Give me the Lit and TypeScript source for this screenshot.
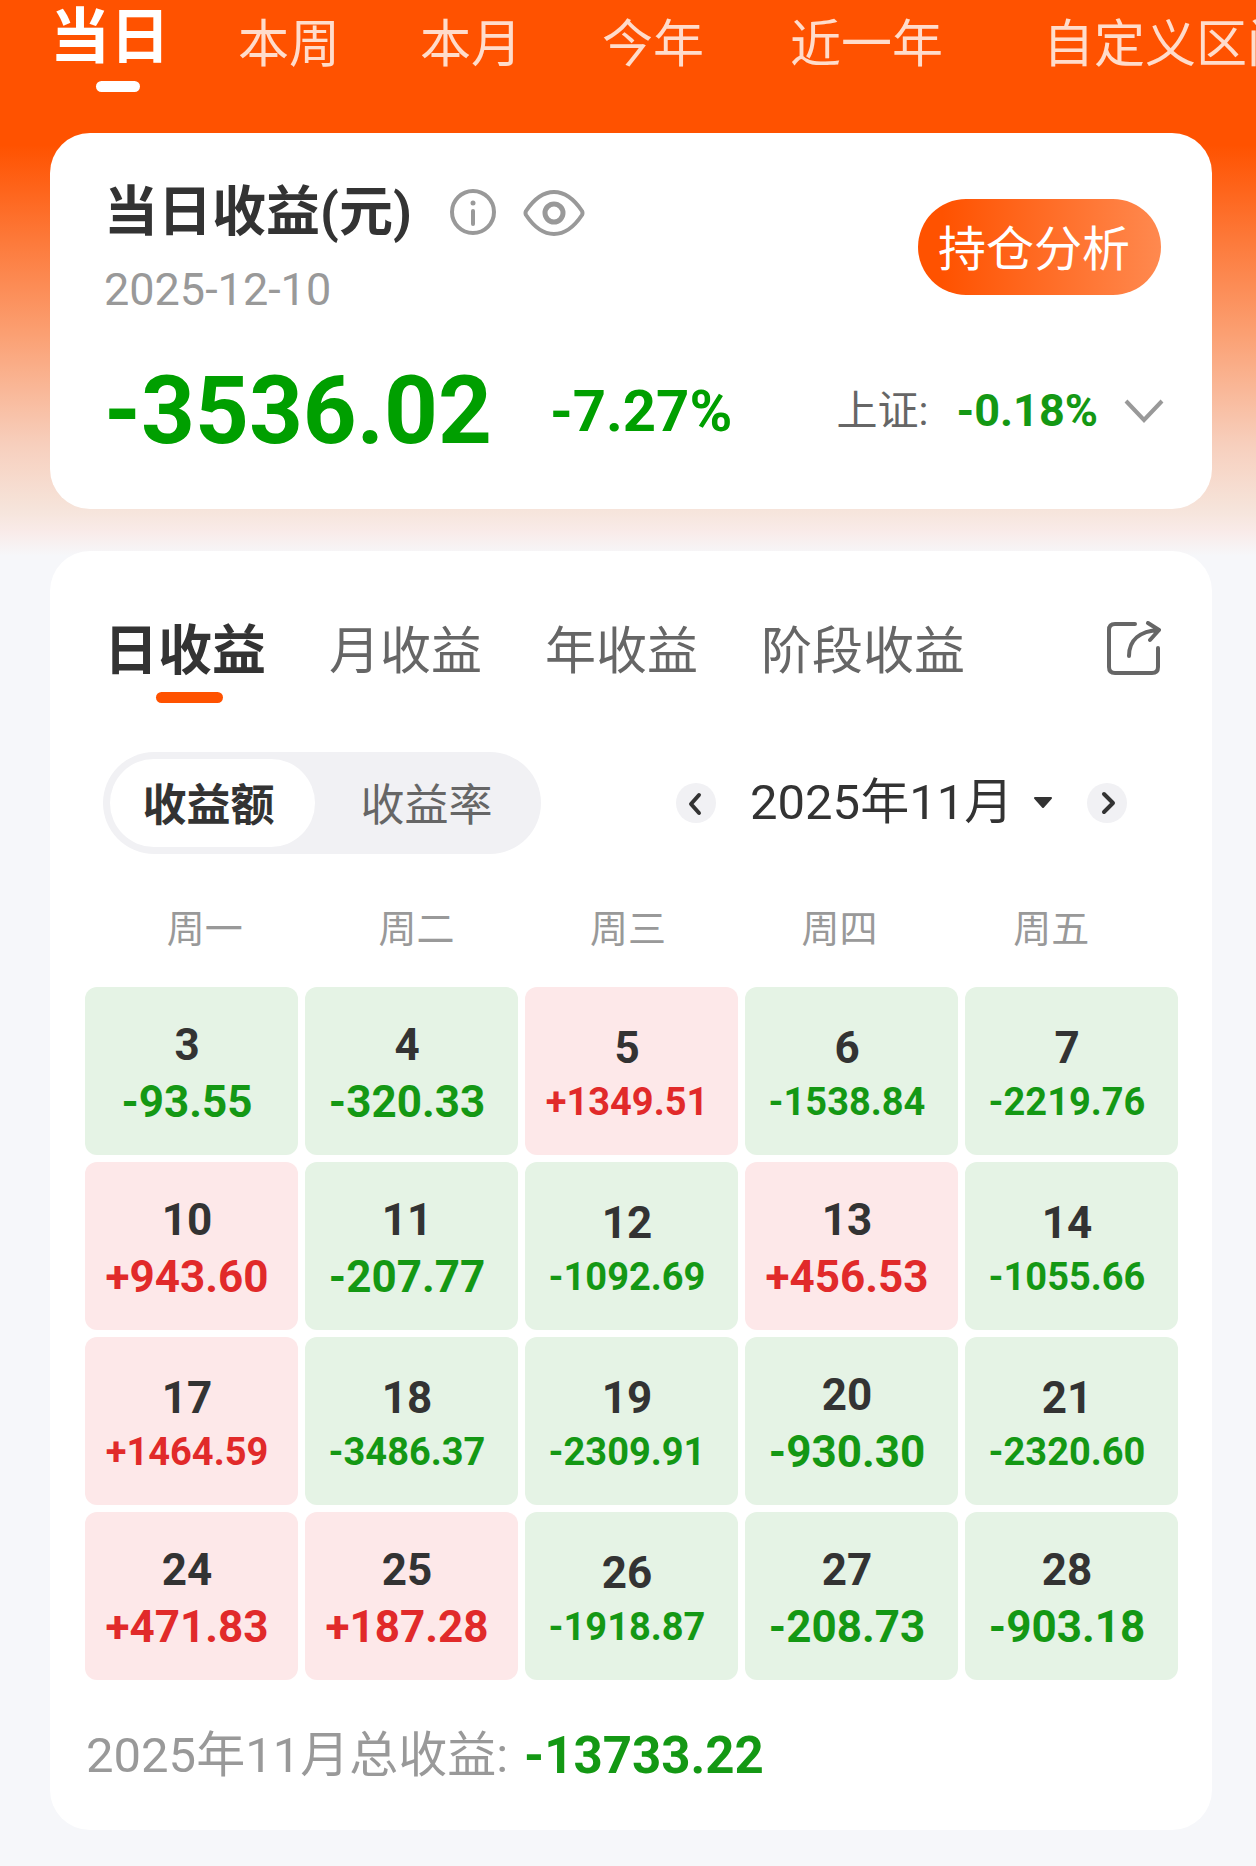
import { LitElement, html, css, svg } from "lit";
import { customElement, property, state } from "lit/decorators.js";
import { classMap } from "lit/directives/class-map.js";

interface Day {
  day: number;
  value: string;
}

const PERIODS = ["当日", "本周", "本月", "今年", "近一年", "自定义区间"];
const VIEWS = ["日收益", "月收益", "年收益", "阶段收益"];
const MODES = ["收益额", "收益率"];
const MONTHS = ["2025年11月", "2025年12月"];
const WEEKDAYS = ["周一", "周二", "周三", "周四", "周五"];

const WEEKS: Day[][] = [
  [
    { day: 3, value: "-93.55" },
    { day: 4, value: "-320.33" },
    { day: 5, value: "+1349.51" },
    { day: 6, value: "-1538.84" },
    { day: 7, value: "-2219.76" },
  ],
  [
    { day: 10, value: "+943.60" },
    { day: 11, value: "-207.77" },
    { day: 12, value: "-1092.69" },
    { day: 13, value: "+456.53" },
    { day: 14, value: "-1055.66" },
  ],
  [
    { day: 17, value: "+1464.59" },
    { day: 18, value: "-3486.37" },
    { day: 19, value: "-2309.91" },
    { day: 20, value: "-930.30" },
    { day: 21, value: "-2320.60" },
  ],
  [
    { day: 24, value: "+471.83" },
    { day: 25, value: "+187.28" },
    { day: 26, value: "-1918.87" },
    { day: 27, value: "-208.73" },
    { day: 28, value: "-903.18" },
  ],
];

const base = css`
  :host {
    display: block;
    font-family: Roboto, "Noto Sans CJK SC", sans-serif;
    color: #333;
  }
  * {
    box-sizing: border-box;
  }
  button,
  select {
    margin: 0;
    padding: 0;
    border: 0;
    background: none;
    font: inherit;
    color: inherit;
    cursor: pointer;
    white-space: nowrap;
  }
  svg {
    display: block;
    fill: none;
  }
`;

@customElement("period-tabs")
class PeriodTabs extends LitElement {
  @state() private active = 0;

  static styles = [
    base,
    css`
      .tabs {
        display: flex;
        align-items: flex-start;
        height: 133px;
        overflow-x: auto;
        overflow-y: hidden;
        scrollbar-width: none;
      }
      .tab {
        flex: none;
        padding: 0 40px;
        font-size: 51px;
        line-height: 90px;
        color: #ffdccb;
      }
      .tab.wide {
        padding: 0 46px;
      }
      .tab.wide:last-child {
        padding-left: 54px;
      }
      .tab.active {
        display: flex;
        flex-direction: column;
        align-items: flex-start;
        gap: 5px;
        margin: 0 12px 0 50px;
        padding: 0 16px 0 0;
        font-size: 60px;
        font-weight: 700;
        line-height: 76px;
        color: #fff;
      }
      .bar {
        align-self: center;
        width: 44px;
        height: 11px;
        margin-left: 16px;
        border-radius: 6px;
        background: #fff;
      }
    `,
  ];

  render() {
    return html`<nav class="tabs">
      ${PERIODS.map(
        (p, i) => html`<button
          class=${classMap({ tab: true, wide: p.length > 2, active: i === this.active })}
          @click=${() => (this.active = i)}
        >
          ${p}${i === this.active ? html`<span class="bar"></span>` : ""}
        </button>`,
      )}
    </nav>`;
  }
}

@customElement("summary-card")
class SummaryCard extends LitElement {
  static styles = [
    base,
    css`
      .card {
        padding: 48px 48px 50px 54px;
        border-radius: 40px;
        background: #fff;
      }
      .head,
      .title-row,
      .figures,
      .index {
        display: flex;
        align-items: center;
      }
      .head {
        justify-content: space-between;
        padding-right: 3px;
      }
      .title {
        margin: 0 37px 0 0;
        font-size: 54px;
        font-weight: 700;
        line-height: 64px;
      }
      .icon {
        margin-right: 26px;
      }
      .date {
        margin: 22px 0 0;
        font-size: 45px;
        line-height: 46px;
        color: #999;
      }
      .analysis {
        height: 96px;
        padding: 0 31px 4px 20px;
        border-radius: 48px;
        background: linear-gradient(90deg, #ff5200 10%, #ff894f);
        font-size: 48px;
        color: #fff;
      }
      .figures {
        margin-top: 50px;
        line-height: 96px;
        font-weight: 700;
        color: #009f00;
      }
      .amount {
        font-size: 94px;
      }
      .rate {
        margin-left: 58px;
        font-size: 58px;
      }
      .index {
        margin-left: auto;
        font-size: 45px;
        color: #149814;
      }
      .label {
        margin-right: 28px;
        font-size: 41px;
        font-weight: 400;
        color: #666;
      }
      .more {
        margin-left: 26px;
      }
    `,
  ];

  render() {
    return html`<section class="card">
      <div class="head">
        <div>
          <div class="title-row">
            <h1 class="title">当日收益(元)</h1>
            <button class="icon" aria-label="说明">
              <svg width="48" height="48" viewBox="0 0 48 48" stroke="#999" stroke-width="4">
                <circle cx="24" cy="23" r="21" />
                <path d="M24 22v13" stroke-linecap="round" />
                <circle cx="24" cy="14" r="2.5" fill="#999" stroke="none" />
              </svg>
            </button>
            <button aria-label="显示金额">
              <svg width="62" height="48" viewBox="0 0 62 48" stroke="#999" stroke-width="4">
                <path
                  d="M3 22C11 10 20 3 31 3s20 7 28 19q1 2 0 4C51 38 42 45 31 45S11 38 3 26q-1-2 0-4z"
                />
                <circle cx="31" cy="24" r="9" stroke-width="5" />
              </svg>
            </button>
          </div>
          <p class="date">2025-12-10</p>
        </div>
        <button class="analysis">持仓分析</button>
      </div>
      <div class="figures">
        <span class="amount">-3536.02</span>
        <span class="rate">-7.27%</span>
        <span class="index">
          <span class="label">上证:</span>
          <span>-0.18%</span>
          <button class="more" aria-label="切换指数">
            <svg width="40" height="24" viewBox="0 0 40 24" stroke="#999" stroke-width="4">
              <path d="M2 2l18 19L38 2" />
            </svg>
          </button>
        </span>
      </div>
    </section>`;
  }
}

@customElement("profit-calendar")
class ProfitCalendar extends LitElement {
  @property({ attribute: false }) weeks: Day[][] = [];

  static styles = [
    base,
    css`
      .table,
      .body {
        display: block;
      }
      .head {
        display: block;
        padding: 0 21px 34px 14px;
      }
      .row {
        display: grid;
        grid-template-columns: repeat(5, 1fr);
      }
      .body .row {
        gap: 7px;
        margin-bottom: 7px;
      }
      .body .row:last-child {
        margin-bottom: 0;
      }
      .weekday {
        padding: 0;
        font-size: 38px;
        font-weight: 400;
        line-height: 48px;
        color: #999;
      }
      .cell {
        display: flex;
        flex-direction: column;
        align-items: center;
        justify-content: center;
        height: 168px;
        padding: 0 9px 1px 0;
        border-radius: 12px;
        background: #e5f3e5;
        font-weight: 700;
        color: #149814;
      }
      .cell.up {
        background: #fde8e9;
        color: #e12a2a;
      }
      .day {
        font-size: 44px;
        line-height: 62px;
        color: #333;
      }
      .value {
        font-size: 44px;
        line-height: 52px;
      }
      .value.long {
        font-size: 38px;
        line-height: 46px;
      }
    `,
  ];

  render() {
    return html`<table class="table">
      <thead class="head">
        <tr class="row">
          ${WEEKDAYS.map((w) => html`<th class="weekday" scope="col">${w}</th>`)}
        </tr>
      </thead>
      <tbody class="body">
        ${this.weeks.map(
          (week) => html`<tr class="row">
            ${week.map(
              (d) => html`<td class=${classMap({ cell: true, up: d.value.startsWith("+") })}>
                <span class="day">${d.day}</span>
                <span class=${classMap({ value: true, long: d.value.length > 7 })}>${d.value}</span>
              </td>`,
            )}
          </tr>`,
        )}
      </tbody>
    </table>`;
  }
}

const arrow = (d: string) => svg`<path d=${d} stroke="#333" stroke-width="4" stroke-linecap="round" stroke-linejoin="round" />`;

@customElement("detail-card")
class DetailCard extends LitElement {
  @state() private view = 0;
  @state() private mode = 0;

  static styles = [
    base,
    css`
      .card {
        padding: 60px 34px 44px 35px;
        border-radius: 40px;
        background: #fff;
      }
      .tabs {
        display: flex;
        align-items: flex-start;
        gap: 63px;
        height: 92px;
        padding: 0 17px 0 19px;
      }
      .tab {
        font-size: 51px;
        line-height: 81px;
        color: #666;
      }
      .tab.active {
        display: flex;
        flex-direction: column;
        align-items: center;
        font-size: 54px;
        font-weight: 700;
        color: #333;
      }
      .bar {
        width: 67px;
        height: 11px;
        margin-left: 8px;
        border-radius: 6px;
        background: #ff5200;
      }
      .share {
        margin: 10px 0 0 auto;
      }
      .controls {
        display: flex;
        align-items: center;
        justify-content: space-between;
        margin: 49px 0 51px;
        padding: 0 51px 0 18px;
      }
      .segment {
        display: flex;
        padding: 7px;
        border-radius: 51px;
        background: #f1f1f4;
      }
      .mode {
        width: 205px;
        height: 88px;
        padding: 0 8px 2px 0;
        border-radius: 44px;
        font-size: 44px;
        color: #666;
      }
      .mode + .mode {
        width: 219px;
        padding: 0 0 2px 4px;
      }
      .mode.active {
        background: #fff;
        font-weight: 700;
        color: #333;
      }
      .month {
        display: flex;
        align-items: center;
      }
      .step {
        border-radius: 50%;
        background: #f1f1f4;
      }
      .picker {
        display: grid;
        align-items: center;
        margin: 0 34px;
      }
      .select,
      .caret {
        grid-area: 1 / 1;
      }
      .select {
        appearance: none;
        padding-right: 39px;
        font-size: 49px;
        line-height: 62px;
      }
      .caret {
        justify-self: end;
        pointer-events: none;
      }
      .total {
        display: flex;
        align-items: center;
        gap: 16px;
        margin: 46px 0 0;
        padding-left: 1px;
        font-size: 49px;
        line-height: 60px;
        color: #999;
      }
      .sum {
        font-size: 51px;
        color: #149814;
      }
    `,
  ];

  render() {
    return html`<section class="card">
      <nav class="tabs">
        ${VIEWS.map(
          (v, i) => html`<button
            class=${classMap({ tab: true, active: i === this.view })}
            @click=${() => (this.view = i)}
          >
            ${v}${i === this.view ? html`<span class="bar"></span>` : ""}
          </button>`,
        )}
        <button class="share" aria-label="分享">
          <svg
            width="54"
            height="54"
            viewBox="0 0 54 54"
            stroke="#666"
            stroke-width="4"
            stroke-linecap="round"
            stroke-linejoin="round"
          >
            <path d="M28 3H8Q2 3 2 9v37q0 6 6 6h37q6 0 6-6V27" />
            <path d="M22 35C22 19 33 10 52 9M41 2l11 7-9 10" />
          </svg>
        </button>
      </nav>
      <div class="controls">
        <div class="segment">
          ${MODES.map(
            (m, i) => html`<button
              class=${classMap({ mode: true, active: i === this.mode })}
              @click=${() => (this.mode = i)}
            >
              ${m}
            </button>`,
          )}
        </div>
        <div class="month">
          <button class="step" aria-label="上个月">
            <svg width="40" height="40" viewBox="0 0 40 40">${arrow("M23 12l-8 9 8 9")}</svg>
          </button>
          <div class="picker">
            <select class="select" aria-label="月份">
              ${MONTHS.map((m) => html`<option>${m}</option>`)}
            </select>
            <svg class="caret" width="20" height="12" viewBox="0 0 20 12">
              <path
                d="M2 1h16l-8 9z"
                fill="#333"
                stroke="#333"
                stroke-width="2"
                stroke-linejoin="round"
              />
            </svg>
          </div>
          <button class="step" aria-label="下个月">
            <svg width="40" height="40" viewBox="0 0 40 40">${arrow("M17 11l9 9-9 9")}</svg>
          </button>
        </div>
      </div>
      <profit-calendar .weeks=${WEEKS}></profit-calendar>
      <p class="total">
        <span>2025年11月总收益:</span>
        <strong class="sum">-13733.22</strong>
      </p>
    </section>`;
  }
}

@customElement("app-root")
class AppRoot extends LitElement {
  static styles = [
    base,
    css`
      .page {
        min-height: 100vh;
        background: linear-gradient(
            #ff5200 145px,
            #fba073 335px,
            #f7cfbd 445px,
            #f6e5dc 512px,
            #f9ebe9 532px,
            #f6f7fa 556px
          )
          #f6f7fa;
      }
      .cards {
        display: flex;
        flex-direction: column;
        gap: 42px;
        padding: 0 44px 36px 50px;
      }
    `,
  ];

  render() {
    return html`<main class="page">
      <period-tabs></period-tabs>
      <div class="cards">
        <summary-card></summary-card>
        <detail-card></detail-card>
      </div>
    </main>`;
  }
}
